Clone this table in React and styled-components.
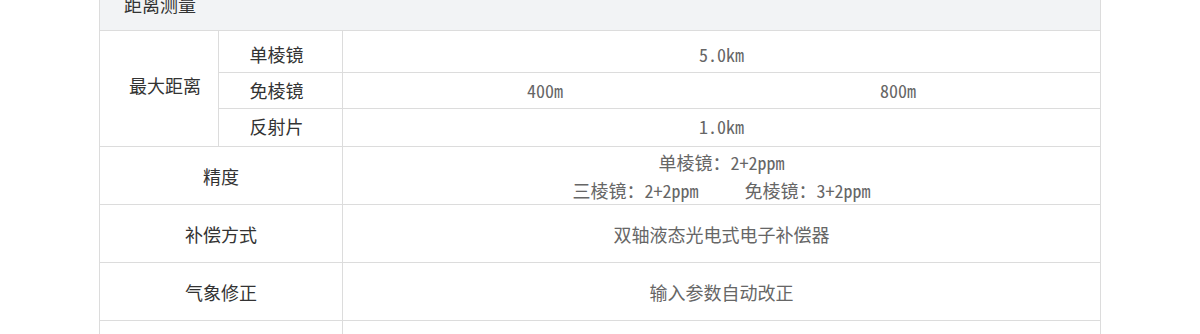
import styled, { createGlobalStyle } from "styled-components";

const GlobalStyle = createGlobalStyle`
  body {
    margin: 0;
    background: #fff;
    font-family: "Noto Sans Mono CJK SC", "Noto Sans CJK SC", monospace;
  }
`;

const Table = styled.div`
  width: 1001px;
  margin: -23px auto 0 99px;
  border-left: 1px solid #dcdcdc;
  display: grid;
  grid-template-columns: 119px 124px 1fr;
  font-size: 18px;
`;

const Head = styled.div`
  grid-column: 1 / 4;
  height: 53px;
  display: flex;
  align-items: center;
  padding-left: 24px;
  background: #f2f3f5;
  color: #333;
  border-right: 1px solid #dcdcdc;
  border-bottom: 1px solid #dcdcdc;
`;

const Cell = styled.div`
  grid-column: ${(p) => p.$span || "auto"};
  grid-row: ${(p) => p.$rows || "auto"};
  height: ${(p) => (p.$h ? p.$h + "px" : "auto")};
  padding: ${(p) => p.$pad || "0"};
  box-sizing: border-box;
  display: flex;
  flex-direction: column;
  align-items: center;
  justify-content: center;
  line-height: 28px;
  color: ${(p) => (p.$value ? "#666" : "#333")};
  border-right: 1px solid #dcdcdc;
  border-bottom: 1px solid #dcdcdc;
`;

const Split = styled(Cell)`
  flex-direction: row;
  justify-content: space-between;
  padding: 0 184px 2px;
`;

const Line = styled.div`
  display: flex;
  gap: 46px;
`;

export default function App() {
  return (
    <>
      <GlobalStyle />
      <Table>
        <Head>距离测量</Head>

        <Cell $rows="2 / 5" $pad="0 0 8px 12px">最大距离</Cell>
        <Cell $h={42} $pad="4px 8px 0 0">单棱镜</Cell>
        <Cell $h={42} $pad="4px 0 0" $value>5.0km</Cell>
        <Cell $h={36} $pad="0 8px 2px 0">免棱镜</Cell>
        <Split $h={36} $value>
          <span>400m</span>
          <span>800m</span>
        </Split>
        <Cell $h={38} $pad="0 8px 3px 0">反射片</Cell>
        <Cell $h={38} $pad="0 0 3px" $value>1.0km</Cell>

        <Cell $span="1 / 3" $h={58}>精度</Cell>
        <Cell $h={58} $value>
          <div>单棱镜：2+2ppm</div>
          <Line>
            <span>三棱镜：2+2ppm</span>
            <span>免棱镜：3+2ppm</span>
          </Line>
        </Cell>

        <Cell $span="1 / 3" $h={58}>补偿方式</Cell>
        <Cell $h={58} $value>双轴液态光电式电子补偿器</Cell>

        <Cell $span="1 / 3" $h={58}>气象修正</Cell>
        <Cell $h={58} $value>输入参数自动改正</Cell>

        <Cell $span="1 / 3" $h={58} />
        <Cell $h={58} $value />
      </Table>
    </>
  );
}
